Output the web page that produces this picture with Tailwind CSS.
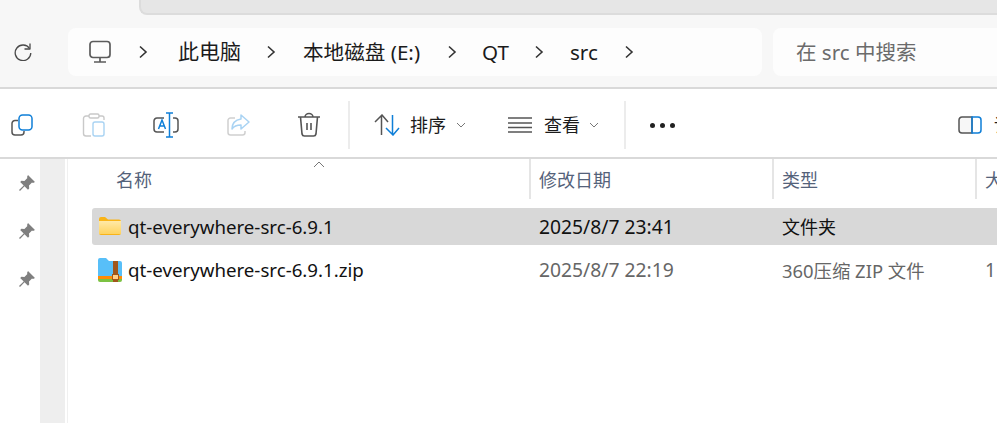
<!DOCTYPE html>
<html lang="zh-CN">
<head>
<meta charset="UTF-8">
<title>src</title>
<script src="https://cdn.jsdelivr.net/npm/@tailwindcss/browser@4"></script>
</head>
<body class="w-[997px] h-[423px] overflow-hidden bg-white text-[#1b1b1b] whitespace-nowrap font-['Noto_Sans','Noto_Sans_CJK_SC',sans-serif]">

<!-- top: tab strip + address bar -->
<div class="h-[89px] bg-[#f7f7f7] border-b-2 border-[#d9d9d9]">
  <div class="h-[15px] ml-[139px] bg-[#e6e6e6] border-b-2 border-l-2 border-[#dcdcdc] rounded-bl-lg"></div>
  <div class="flex h-[48px] mt-[13px]">
    <div class="w-[46px] ml-0 flex items-center justify-center">
      <svg width="18" height="18" viewBox="0 0 18 18" fill="none" stroke="#4a4a4a" stroke-width="1.300"><path d="M15.500 5.500A7.800 7.800 0 1 0 16.800 10"/><path d="M16 .5v5.500h-5.500" stroke-linejoin="round"/></svg>
    </div>
    <div class="ml-[22px] w-[694px] bg-[#fdfdfd] rounded-lg flex items-center text-[21px]">
      <svg class="ml-[20px]" width="24" height="24" viewBox="0 0 24 24" fill="none" stroke="#5c5c5c" stroke-width="1.700"><rect x="2" y="1.500" width="20" height="16" rx="3"/><path d="M12 18v3.500M6 22h12"/></svg>
      <svg class="ml-[26px]" width="10" height="14" viewBox="0 0 10 14" fill="none" stroke="#333" stroke-width="1.600"><path d="M2 1.500 8 7l-6 5.500"/></svg>
      <span class="ml-[30px]">此电脑</span>
      <svg class="ml-[25px]" width="10" height="14" viewBox="0 0 10 14" fill="none" stroke="#333" stroke-width="1.600"><path d="M2 1.500 8 7l-6 5.500"/></svg>
      <span class="ml-[27px] text-[20.600px]">本地磁盘 (E:)</span>
      <svg class="ml-[27px]" width="10" height="14" viewBox="0 0 10 14" fill="none" stroke="#333" stroke-width="1.600"><path d="M2 1.500 8 7l-6 5.500"/></svg>
      <span class="ml-[25px] text-[20.600px]">QT</span>
      <svg class="ml-[25px]" width="10" height="14" viewBox="0 0 10 14" fill="none" stroke="#333" stroke-width="1.600"><path d="M2 1.500 8 7l-6 5.500"/></svg>
      <span class="ml-[26px] text-[20.600px]">src</span>
      <svg class="ml-[26px]" width="10" height="14" viewBox="0 0 10 14" fill="none" stroke="#333" stroke-width="1.600"><path d="M2 1.500 8 7l-6 5.500"/></svg>
    </div>
    <div class="ml-[11px] flex-1 bg-[#fdfdfd] rounded-l-lg flex items-center pl-[23px] text-[20.500px] text-[#6b6b6b]">在 src 中搜索</div>
  </div>
</div>

<!-- command bar -->
<div class="h-[70px] pt-[4px] border-b-2 border-[#d9d9d9] flex items-center text-[18px] overflow-hidden [&>*]:shrink-0">
  <svg class="ml-[11px]" width="22" height="22" viewBox="0 0 22 22" fill="none" stroke-width="1.500"><path d="M7 6.500H4a3 3 0 0 0-3 3V18a3 3 0 0 0 3 3h6a3 3 0 0 0 3-3v-1" stroke="#555"/><rect x="8" y="1" width="13" height="15" rx="3.500" stroke="#0f7fd8"/></svg>
  <svg class="ml-[49px]" width="24" height="24" viewBox="0 0 24 24" fill="none" stroke-width="1.400"><path d="M7 3H4a2.500 2.500 0 0 0-2.500 2.500v15A2.500 2.500 0 0 0 4 23h5M17 3h3a2 2 0 0 1 2 2v2" stroke="#c9c9c9"/><rect x="7" y="1" width="10" height="4" rx="1.500" stroke="#c9c9c9"/><rect x="11" y="9" width="11" height="14" rx="2" stroke="#a9d3f3"/></svg>
  <svg class="ml-[47px]" width="26" height="26" viewBox="0 0 26 26" fill="none" stroke-width="1.500"><path d="M11 6H4a3 3 0 0 0-3 3v8a3 3 0 0 0 3 3h7M20 6h2a3 3 0 0 1 3 3v8a3 3 0 0 1-3 3h-2" stroke="#555"/><path d="M16.500 1v24M13 1h7M13 25h7M5.500 17l3.500-9 3.500 9M6.800 14h4.500" stroke="#0f7fd8"/></svg>
  <svg class="ml-[47px]" width="24" height="24" viewBox="0 0 24 24" fill="none" stroke-width="1.500"><path d="M9 5H4.500A2.500 2.500 0 0 0 2 7.500v12A2.500 2.500 0 0 0 4.500 22h12a2.500 2.500 0 0 0 2.500-2.500V18" stroke="#d0d0d0"/><path d="M15 2l8 7-8 7v-4c-4 0-7 1-9 4 0-5 3-9 9-10z" stroke="#a9d3f3" stroke-linejoin="round"/></svg>
  <svg class="ml-[47px]" width="24" height="26" viewBox="0 0 24 26" fill="none" stroke="#555" stroke-width="1.600"><path d="M1 5h22M8 5a4 3.500 0 0 1 8 0M3.500 5l1.500 17a2.500 2.500 0 0 0 2.500 2h9a2.500 2.500 0 0 0 2.500-2L20.500 5M10 11v7M14 11v7"/></svg>
  <div class="ml-[27px] w-[2px] h-[48px] bg-[#ececec]"></div>
  <svg class="ml-[24px]" width="26" height="22" viewBox="0 0 26 22" fill="none" stroke-width="1.500"><path d="M1 8l7-7 6 7M7.500 1.500V21" stroke="#555"/><path d="M12 14l7 7 6-7M18.500 21V1" stroke="#0f7fd8"/></svg>
  <span class="ml-[10px]">排序</span>
  <svg class="ml-[10px]" width="10" height="6" viewBox="0 0 10 6" fill="none" stroke="#777" stroke-width="1"><path d="M1 1l4 4 4-4"/></svg>
  <svg class="ml-[42px]" width="24" height="16" viewBox="0 0 24 16" fill="none" stroke="#555" stroke-width="1.500"><path d="M0 1h24M0 6h24M0 10.500h24M0 15h24"/></svg>
  <span class="ml-[12px]">查看</span>
  <svg class="ml-[9px]" width="10" height="6" viewBox="0 0 10 6" fill="none" stroke="#777" stroke-width="1"><path d="M1 1l4 4 4-4"/></svg>
  <div class="ml-[25px] w-[2px] h-[48px] bg-[#ececec]"></div>
  <div class="ml-[24px] flex gap-[5px]">
    <span class="w-[5px] h-[5px] rounded-full bg-[#222]"></span>
    <span class="w-[5px] h-[5px] rounded-full bg-[#222]"></span>
    <span class="w-[5px] h-[5px] rounded-full bg-[#222]"></span>
  </div>
  <svg class="ml-[283px]" width="24" height="18" viewBox="0 0 24 18" fill="none" stroke-width="1.500"><path d="M14 1H4a3 3 0 0 0-3 3v10a3 3 0 0 0 3 3h10z" stroke="#555" fill="#f7f7f7"/><path d="M14 1h6a3 3 0 0 1 3 3v10a3 3 0 0 1-3 3h-6z" stroke="#0f7fd8"/></svg>
  <span class="ml-[12px]">详细信息</span>
</div>

<div class="flex h-[264px]">
  <!-- nav pane -->
  <div class="w-[40px] flex flex-col items-start pl-[18px] pt-[15px] gap-[30px] shrink-0">
    <svg width="18" height="18" viewBox="0 0 18 18" fill="#7f7f7f"><path d="M10 1l7 7-2 1-1-.5-3 3 .2 3-1.200 1.200-3.500-3.500L2 17l-1-1 4.700-4.500L2.200 8 3.400 6.800l3 .2 3-3L9 3z"/></svg>
    <svg width="18" height="18" viewBox="0 0 18 18" fill="#7f7f7f"><path d="M10 1l7 7-2 1-1-.5-3 3 .2 3-1.200 1.200-3.500-3.500L2 17l-1-1 4.700-4.500L2.200 8 3.400 6.800l3 .2 3-3L9 3z"/></svg>
    <svg width="18" height="18" viewBox="0 0 18 18" fill="#7f7f7f"><path d="M10 1l7 7-2 1-1-.5-3 3 .2 3-1.200 1.200-3.500-3.500L2 17l-1-1 4.700-4.500L2.200 8 3.400 6.800l3 .2 3-3L9 3z"/></svg>
  </div>
  <div class="w-[25px] bg-[#eeeeee] shrink-0"></div>
  <div class="w-[2px] shrink-0"></div>
  <div class="w-[1px] bg-[#f0f0f0] shrink-0"></div>

  <!-- file list -->
  <div class="flex-1 relative overflow-hidden">
    <svg class="absolute left-[245px] top-[2px]" width="12" height="7" viewBox="0 0 12 7" fill="none" stroke="#777" stroke-width="1"><path d="M1 6l5-5 5 5"/></svg>
    <div class="flex h-[40px] text-[#54627a] text-[18px] ml-[24px]">
      <div class="w-[437px] shrink-0 pl-[24px] pt-[8px]">名称</div>
      <div class="w-[243px] shrink-0 border-l-2 border-[#e5e5e5] pl-[8px] pt-[8px]">修改日期</div>
      <div class="w-[203px] shrink-0 border-l-2 border-[#e5e5e5] pl-[8px] pt-[8px]">类型</div>
      <div class="w-[100px] shrink-0 border-l-2 border-[#e5e5e5] pl-[8px] pt-[8px]">大小</div>
    </div>
    <div class="flex h-[37px] mt-[9px] ml-[24px] items-center bg-[#d8d8d8] rounded-l-[3px] text-[18px]">
      <div class="w-[437px] shrink-0 pl-[7px] flex items-center gap-[7px]">
        <svg width="22" height="18" viewBox="0 0 22 18"><defs><linearGradient id="folderFill" x1="0" y1="0" x2="0" y2="1"><stop offset="0" stop-color="#ffe9a8"/><stop offset="1" stop-color="#ffd35f"/></linearGradient></defs><path d="M0 2a2 2 0 0 1 2-2h4l3 2.500h11a2 2 0 0 1 2 2V16a2 2 0 0 1-2 2H2a2 2 0 0 1-2-2z" fill="#f9b418"/><path d="M0 4h22v13H0z" fill="url(#folderFill)"/></svg>
        <span class="text-[#111] text-[18.700px] pt-[2px]">qt-everywhere-src-6.9.1</span>
      </div>
      <div class="w-[243px] shrink-0 pl-[10px] pt-[2px] text-[#111] text-[19.300px]">2025/8/7 23:41</div>
      <div class="w-[203px] shrink-0 pl-[10px] pt-[2px] text-[#111]">文件夹</div>
    </div>
    <div class="flex h-[37px] mt-[7px] ml-[24px] items-center text-[18px]">
      <div class="w-[437px] shrink-0 pl-[6px] flex items-center gap-[6px]">
        <svg width="24" height="24" viewBox="0 0 24 24"><path d="M0 2a2 2 0 0 1 2-2h6l3 3h11a2 2 0 0 1 2 2v13H0z" fill="#58bff8"/><path d="M0 18h24v3H0z" fill="#ff8c06"/><path d="M0 21h24v1a2 2 0 0 1-2 2H2a2 2 0 0 1-2-2z" fill="#7cc243"/><path d="M15 3h5v21h-5z" fill="#a0561b"/><rect x="14.500" y="16.500" width="6" height="5" fill="#ffd08a" stroke="#a0561b"/></svg>
        <span class="text-[#111] text-[18.700px]">qt-everywhere-src-6.9.1.zip</span>
      </div>
      <div class="w-[243px] shrink-0 pl-[10px] text-[#666] text-[19.300px]">2025/8/7 22:19</div>
      <div class="w-[203px] shrink-0 pl-[10px] text-[#666] text-[18.400px]">360压缩 ZIP 文件</div>
      <div class="pl-[10px] text-[#666] text-[19px]">1</div>
    </div>
  </div>
</div>
</body>
</html>
